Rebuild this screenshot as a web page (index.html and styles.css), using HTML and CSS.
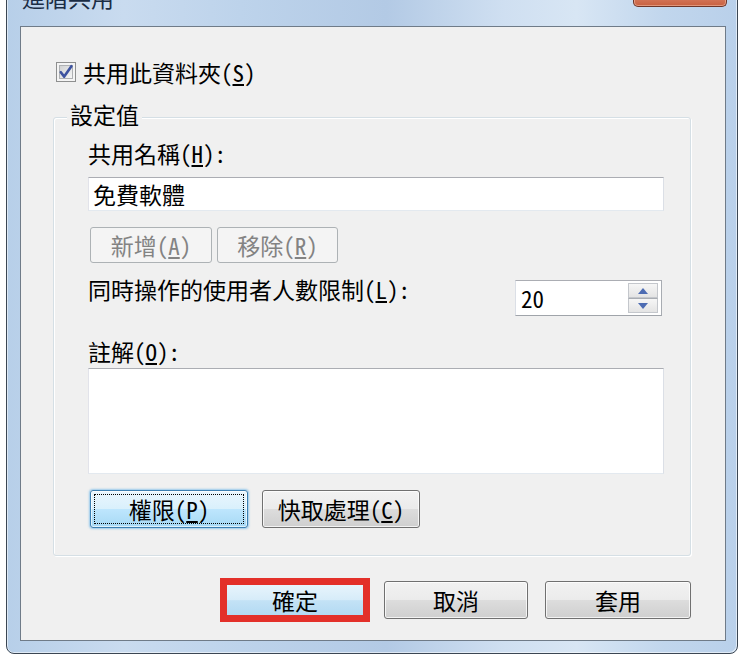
FILE: index.html
```html
<!DOCTYPE html>
<html lang="zh-Hant">
<head>
<meta charset="utf-8">
<title>進階共用</title>
<link rel="stylesheet" href="styles.css">
</head>
<body>
<div class="window">
  <div class="titlebar">
    <div class="title">進階共用</div>
    <div class="close"></div>
  </div>
  <div class="panel">
    <div class="check-row">
      <span class="checkbox">
        <svg width="20" height="20" viewBox="0 0 20 20">
          <defs>
            <linearGradient id="cg" x1="0" y1="0" x2="1" y2="1">
              <stop offset="0" stop-color="#cfd0d2"/>
              <stop offset="1" stop-color="#f7f7f7"/>
            </linearGradient>
          </defs>
          <rect x="0.5" y="0.5" width="19" height="19" fill="#f4f4f4" stroke="#8e8f8f"/>
          <rect x="3.5" y="3.5" width="13" height="13" fill="url(#cg)" stroke="#aeb0b3"/>
          <path d="M4.8 10.2 L8.2 14.6 L15.4 4.2" fill="none" stroke="#3d52a0" stroke-width="2.6" stroke-linejoin="round" stroke-linecap="round"/>
        </svg>
      </span>
      <span class="check-label">共用此資料夾(<u>S</u>)</span>
    </div>

    <div class="group">
      <div class="group-title">設定值</div>
      <div class="label name-label">共用名稱(<u>H</u>):</div>
      <div class="textbox">免費軟體</div>
      <div class="btn-row add-row">
        <button class="btn disabled w-add">新增(<u>A</u>)</button>
        <button class="btn disabled w-remove">移除(<u>R</u>)</button>
      </div>
      <div class="limit-row">
        <div class="label">同時操作的使用者人數限制(<u>L</u>):</div>
        <div class="spin">
          <span class="spin-value">20</span>
          <span class="spin-btns">
            <span class="spin-half">
              <svg width="10" height="6" viewBox="0 0 10 6"><polygon points="0,6 5,0 10,6" fill="#4d6cb3"/></svg>
            </span>
            <span class="spin-half">
              <svg width="10" height="6" viewBox="0 0 10 6"><polygon points="0,0 10,0 5,6" fill="#4d6cb3"/></svg>
            </span>
          </span>
        </div>
      </div>
      <div class="label comment-label">註解(<u>O</u>):</div>
      <div class="textarea"></div>
      <div class="btn-row perm-row">
        <button class="btn default w-perm">權限(<u>P</u>)</button>
        <button class="btn w-cache">快取處理(<u>C</u>)</button>
      </div>
    </div>

    <div class="footer">
      <div class="highlight"><button class="btn ok">確定</button></div>
      <button class="btn w-cancel">取消</button>
      <button class="btn w-apply">套用</button>
    </div>
  </div>
</div>
</body>
</html>
```

FILE: styles.css
```css
* { box-sizing: border-box; }

html, body {
  margin: 0;
  background: #ffffff;
}

body {
  font-family: "Noto Sans CJK TC", "Noto Sans", sans-serif;
  font-size: 23px;
  color: #000;
  font-feature-settings: "hwid" 1;
  overflow: hidden;
}

.window {
  margin: -20px 0 0 6px;
  width: 732px;
  border: 1px solid #3b4653;
  border-radius: 0 0 8px 8px;
  padding: 0 11px 12px 13px;
  background: linear-gradient(90deg, #b7cfe9 0%, #c9dbef 16%, #bdd3eb 32%, #b3cae5 52%, #cfdff1 68%, #d8e6f4 78%, #c1d6ed 90%, #b9d0ea 100%);
  box-shadow: inset 1px 0 0 rgba(255,255,255,.55), inset -1px -1px 0 rgba(255,255,255,.55);
}

.titlebar {
  height: 45px;
  display: flex;
  align-items: flex-start;
  padding-top: 4px;
}

.title {
  flex: 1;
  font-size: 23px;
  line-height: 24px;
  color: #1a2c44;
  padding-left: 2px;
}

.close {
  width: 94px;
  height: 26px;
  margin-top: -4px;
  margin-right: -1px;
  border: 1px solid #6e3528;
  border-top: none;
  border-radius: 0 0 5px 5px;
  background: linear-gradient(#e8a892, #d98166 55%, #c8603f);
  box-shadow: inset 0 0 0 1px rgba(255,215,195,.45);
}

.panel {
  border: 1px solid #6f7b88;
  background: #f0f0f0;
  padding: 33px 34px 18px 32px;
}

.check-row {
  display: flex;
  align-items: center;
  height: 24px;
  margin-left: 3px;
}

.checkbox {
  width: 20px;
  height: 20px;
  display: flex;
}

.check-label {
  margin-left: 7px;
  line-height: 24px;
}

.group {
  margin-top: 33px;
  border: 1px solid #d5dfe5;
  border-radius: 3px;
  box-shadow: inset 1px 1px 0 #ffffff, 1px 1px 0 #ffffff;
  padding: 0 26px 27px 34px;
}

.group-title {
  width: fit-content;
  margin: -16px 0 0 -21px;
  padding: 0 3px;
  background: #f0f0f0;
  line-height: 24px;
}

.label {
  line-height: 24px;
}

.name-label {
  margin-top: 15px;
}

.textbox {
  margin-top: 12px;
  height: 34px;
  border: 1px solid;
  border-color: #abadb3 #dbdfe6 #e3e9ef #e2e3ea;
  background: #fff;
  padding: 0 4px;
  line-height: 32px;
}

.btn-row {
  display: flex;
  margin-left: 2px;
}

.add-row {
  margin-top: 16px;
  gap: 5px;
}

.btn {
  font: inherit;
  font-feature-settings: "hwid" 1;
  color: #000;
  height: 38px;
  padding: 0;
  line-height: 34px;
  border: 1px solid #707070;
  border-radius: 3px;
  background: linear-gradient(#f2f2f2 0%, #ebebeb 50%, #dddddd 50%, #cfcfcf 100%);
  box-shadow: inset 0 0 0 1px rgba(255,255,255,.75);
}

.btn.disabled {
  height: 36px;
  border-color: #adb2b5;
  background: #f4f4f4;
  color: #838383;
  box-shadow: none;
}

.w-add { width: 122px; }
.w-remove { width: 121px; }

.limit-row {
  margin-top: 14px;
  display: flex;
  justify-content: space-between;
  align-items: flex-start;
}

.spin {
  margin-top: 3px;
  margin-right: 2px;
  width: 147px;
  height: 36px;
  display: flex;
  justify-content: space-between;
  padding: 2px 3px 2px 5px;
  border: 1px solid;
  border-color: #abadb3 #a8acb2 #a0a4aa #dbdfe6;
  background: #fff;
}

.spin-value {
  line-height: 30px;
}

.spin-btns {
  width: 30px;
  display: flex;
  flex-direction: column;
}

.spin-half {
  flex: 1;
  display: flex;
  align-items: center;
  justify-content: center;
  border: 1px solid #c4c7cc;
  background: linear-gradient(#f6f6f6, #e4e4e4);
}

.spin-half + .spin-half {
  border-top-color: #a9adb3;
}

.comment-label {
  margin-top: 23px;
}

.textarea {
  margin-top: 5px;
  height: 106px;
  border: 1px solid;
  border-color: #abadb3 #dbdfe6 #e3e9ef #e2e3ea;
  background: #fff;
}

.perm-row {
  margin-top: 16px;
  gap: 14px;
}

.w-perm, .w-cache { width: 158px; }

.btn.default {
  border-color: #3c7fb1;
  background: linear-gradient(#eaf6fd 0%, #d9f0fc 50%, #bee6fd 50%, #a7d9f5 100%);
  box-shadow: inset 0 0 0 1px rgba(255,255,255,.6), 0 0 2px 1px rgba(80,170,230,.55);
  outline: 1px dotted #000;
  outline-offset: -5px;
}

.footer {
  margin-top: 22px;
  display: flex;
  justify-content: flex-end;
  align-items: center;
}

.highlight {
  width: 150px;
  height: 44px;
  border: 7px solid #e3302a;
  display: flex;
}

.btn.ok {
  width: 100%;
  height: 100%;
  border: none;
  border-radius: 0;
  line-height: 28px;
  background: linear-gradient(#e7f4fc 0%, #d6ecf9 50%, #c3e2f6 52%, #b3daf3 100%);
  box-shadow: none;
}

.w-cancel {
  width: 144px;
  margin-left: 14px;
}

.w-apply {
  width: 146px;
  margin-left: 17px;
}
```
